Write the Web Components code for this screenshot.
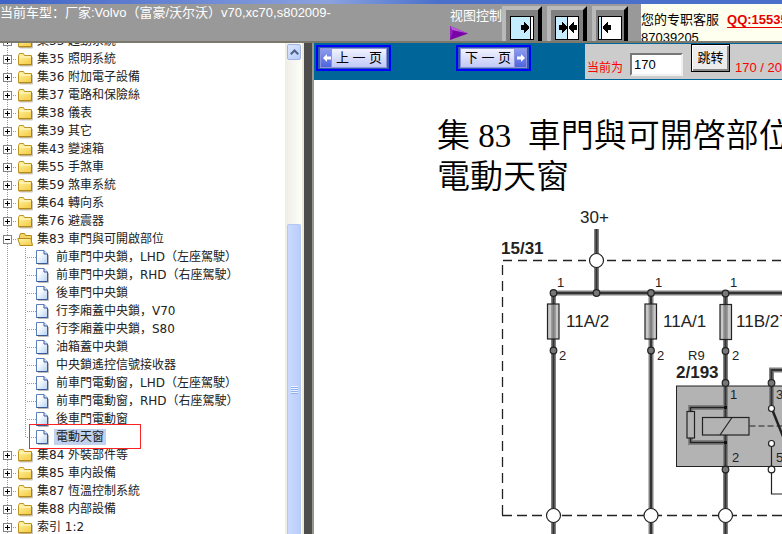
<!DOCTYPE html>
<html lang="zh">
<head>
<meta charset="utf-8">
<title>Volvo 电路图</title>
<style>
html, body { margin: 0; height: 100%; overflow: hidden; background: #fff; }
body { font: 13px/18px "Liberation Sans", "Noto Sans CJK SC", sans-serif; }
</style>
</head>
<body>
<wiring-app></wiring-app>
<script>
const define = (name, html, setup) => {
  const tpl = document.createElement('template');
  tpl.innerHTML = html;
  customElements.define(name, class extends HTMLElement {
    connectedCallback() {
      if (this.shadowRoot) return;
      const root = this.attachShadow({ mode: 'open' });
      root.append(tpl.content.cloneNode(true));
      if (setup) setup(this, root);
    }
  });
};

/* Bevelled button of the view switcher */
define('view-button', `
<style>
:host { display: block; flex: none; }
button { display: flex; align-items: center; justify-content: center; width: 40px; height: 35px; box-sizing: border-box;
  margin: 0; padding: 4px 0 0; background: #808080; border: 0 solid; border-width: 4px 4px 0 4px;
  border-color: #b9b9b9 #000 #000 #b9b9b9; }
:host([narrow]) button { width: 36px; }
svg { display: block; flex: none; }
</style>
<button type="button"><svg width="24" height="24" viewBox="0 0 24 24" shape-rendering="crispEdges"></svg></button>`,
(host, root) => {
  const right = x => `<path d="M${x} 9h3v-3h1v1h1v1h1v1h1v1h1v3h-1v1h-1v1h-1v1h-1v1h-1v-3h-3z"/>`;
  const left = x => `<path d="M${x} 9h-3v-3h-1v1h-1v1h-1v1h-1v1h-1v3h1v1h1v1h1v1h1v1h1v-3h3z"/>`;
  const frame = '<rect x=".5" y=".5" width="23" height="23" fill="#fff" stroke="#000"/>';
  const art = {
    left: frame + '<path fill="#c4edff" d="M1 1h19v22H1z"/><path d="M20 1h1v22h-1z"/>' + right(11),
    both: frame + '<path fill="#c4edff" d="M1 1h11v22H1z"/><path d="M12 1h1v22h-1z"/>' + right(4) + left(22),
    right: frame + '<path fill="#c4edff" d="M1 1h2v22H1z"/><path d="M3 1h1v22H3z"/>' + left(13)
  };
  root.querySelector('svg').innerHTML = art[host.getAttribute('kind')];
  root.querySelector('button').setAttribute('aria-label', host.getAttribute('label'));
});

define('app-header', `
<style>
:host { display: block; flex: none; border-bottom: 2px solid #7b796c; background: #999; color: #fff; }
.strip { height: 4px; background: linear-gradient(90deg, #3f63c6, #8ba2df 42%, #4a70cc 56%, #4a70cc); }
.row { display: flex; height: 37px; overflow: hidden; }
.car { flex: 1 1 0; min-width: 0; white-space: nowrap; overflow: hidden; }
.view { width: 52px; flex: none; padding-top: 3px; white-space: nowrap; }
.view svg { display: block; margin-top: 1px; }
.buttons { display: flex; flex: none; padding-top: 2px; gap: 5px; width: 139px; }
.service { flex: 0 0 141px; background: #fffff0; color: #000; padding-top: 7px; overflow: hidden; white-space: nowrap; }
.service div { height: 18px; }
a { color: #e60000; font-weight: bold; margin-left: 8px; text-underline-offset: 3px; }
</style>
<div class="strip"></div>
<div class="row">
  <div class="car">当前车型：厂家:Volvo（富豪/沃尔沃）v70,xc70,s802009-</div>
  <div class="view">视图控制
    <svg width="18" height="14" viewBox="0 0 18 14"><path d="M0 0L18 7.500L0 14z" fill="#7a00a8"/><path d="M0 0L18 7.500L2 4z" fill="#b65ad6"/><path d="M0 14V0l3 6z" fill="#9420be"/></svg>
  </div>
  <div class="buttons">
    <view-button kind="left" label="左"></view-button>
    <view-button kind="both" label="左右"></view-button>
    <view-button kind="right" label="右" narrow></view-button>
  </div>
  <div class="service"><div>您的专职客服<a href="#qq">QQ:15535</a></div><div>87039205</div></div>
</div>`);

/* Group row with expander and folder */
define('tree-folder', `
<style>
:host { display: block; }
.row { display: flex; align-items: center; height: 18px; padding-left: 3px;
  background: repeating-linear-gradient(180deg, #999 0 1px, #fff 1px 2px) 7px 0 / 1px 100% no-repeat; }
button { flex: none; width: 9px; height: 9px; padding: 0; margin: 0; border: 1px solid #848484; background: #fff; display: block; }
button svg, .icon { display: block; flex: none; }
.dash { flex: none; width: 5px; height: 1px; background: repeating-linear-gradient(90deg, #fff 0 1px, #999 1px 2px); }
a { margin-left: 3px; color: #222; text-decoration: none; white-space: nowrap; }
.kids { background: repeating-linear-gradient(180deg, #999 0 1px, #fff 1px 2px) 7px 0 / 1px 100% no-repeat,
  repeating-linear-gradient(180deg, #999 0 1px, #fff 1px 2px) 25px 0 / 1px calc(100% - 9px) no-repeat; }
</style>
<div class="row">
  <button type="button" aria-label="展开"><svg width="7" height="7" viewBox="0 0 7 7" shape-rendering="crispEdges"><path d="M1 3h5v1H1z"/><path class="v" d="M3 1h1v5H3z"/></svg></button>
  <span class="dash"></span>
  <svg class="icon" width="17" height="15" viewBox="0 0 17 15"></svg>
  <a href="#group"></a>
</div>
<div class="kids"><slot></slot></div>`,
(host, root) => {
  const open = host.hasAttribute('open');
  root.querySelector('a').textContent = host.getAttribute('label');
  if (open) root.querySelector('.v').remove();
  root.querySelector('.icon').innerHTML = `<defs><linearGradient id="g" x1="0" y1="0" x2="0.6" y2="1"><stop offset="0" stop-color="#fff7a8"/><stop offset="1" stop-color="#f6d050"/></linearGradient></defs>` + (open
    ? '<path d="M2.500 12V3.500l1-2h4l1 2h6V12z" fill="#f3d566" stroke="#b48a18"/><path d="M.8 6.500h13L15.500 13.500H3z" fill="url(#g)" stroke="#b48a18"/>'
    : '<path d="M15.500 5v9H3" fill="none" stroke="#c8c8c8"/><path d="M1.500 12.500V3.500l1-2h4l1 2h7v9z" fill="url(#g)" stroke="#c09424"/><path d="M2 5h12" stroke="#fffbd0"/><path d="M1.500 13h13V4" fill="none" stroke="#a8801c"/>');
});

/* Document row */
define('tree-page', `
<style>
:host { display: flex; align-items: center; height: 18px; padding-left: 26px; position: relative; }
.dash { flex: none; width: 10px; height: 1px; background: repeating-linear-gradient(90deg, #fff 0 1px, #999 1px 2px); }
svg { display: block; flex: none; }
a { margin-left: 5px; padding: 0 2px; line-height: 16px; color: #222; text-decoration: none; white-space: nowrap; }
:host([selected]) a { background: #c1d2ee; }
:host([selected])::after { content: ""; position: absolute; left: 29px; top: -4px; width: 110px; height: 23px; border: 1px solid #f22; }
</style>
<span class="dash"></span>
<svg width="13" height="15" viewBox="0 0 13 15"><defs><linearGradient id="p" x1="0" y1="0" x2="1" y2="1"><stop offset=".3" stop-color="#fff"/><stop offset="1" stop-color="#b4d0f4"/></linearGradient></defs><path d="M12.500 5v9.500H2" fill="none" stroke="#bbb"/><path d="M.5 .5h7.500l3.500 3.500v9.500H.5z" fill="url(#p)" stroke="#5b80bd"/><path d="M8 .5V4h3.500" fill="#dceafc" stroke="#39599c"/><path d="M11.500 4v9.500H.5" fill="none" stroke="#39599c"/></svg>
<a href="#page"><slot></slot></a>`);

define('tree-view', `
<style>
:host { display: block; flex: 1; min-width: 0; overflow: hidden; font: 12px/18px "DejaVu Sans", "Noto Sans CJK SC", sans-serif; }
nav { margin-top: -11px; }
</style>
<nav><slot></slot></nav>`);

define('pane-scrollbar', `
<style>
:host { display: flex; flex-direction: column; flex: none; width: 14px; padding: 1px 1px 0 2px; background: linear-gradient(90deg, #eeede5, #fefefb); }
button { flex: none; height: 16px; width: 14px; box-sizing: border-box; padding: 0; margin: 0; border: 1px solid #9fb5e6; border-radius: 2px;
  background: linear-gradient(135deg, #dbe6ff, #b7cbfa); display: grid; place-items: center; }
.track { flex: 34 1 0; }
.thumb { flex: 64 1 0; border: 1px solid #b4c8f6; border-bottom: 0; border-radius: 2px 2px 0 0; background: linear-gradient(90deg, #cbdafe, #b9cdfb);
  display: flex; justify-content: center; align-items: center; }
.grip { width: 7px; height: 8px; margin-top: 20px; background: repeating-linear-gradient(180deg, #eef4fe 0 1px, #8cb0f8 1px 2px); }
svg { display: block; }
</style>
<button type="button" aria-label="向上滚动"><svg width="9" height="6" viewBox="0 0 9 6"><path d="M.8 5.200L4.500 1.500l3.700 3.700" fill="none" stroke="#4d6185" stroke-width="2"/></svg></button>
<div class="track"></div>
<div class="thumb"><div class="grip"></div></div>`);

define('page-button', `
<style>
:host { display: block; flex: none; }
button { display: flex; width: 75px; height: 26px; box-sizing: border-box; padding: 2px 3px; margin: 0; border: 2px solid #00f; background: #2a5fa8; font: inherit; line-height: 18px; color: #000; }
:host([next]) button { flex-direction: row-reverse; }
.arrow { flex: none; width: 11px; height: 18px; background: linear-gradient(#8c9cf0, #5064dc); display: grid; place-items: center; box-shadow: 0 0 0 1px #8c92dc; }
.text { flex: 1; height: 18px; background: linear-gradient(#f2f3ff, #c0c8f6); text-align: center; white-space: nowrap; box-shadow: 0 0 0 1px #8c92dc; }
</style>
<button type="button"><span class="arrow"><svg width="8" height="8" viewBox="0 0 8 8"><path fill="#fff"/></svg></span><span class="text"><slot></slot></span></button>`,
(host, root) => root.querySelector('path').setAttribute('d',
  host.hasAttribute('next') ? 'M8 4L4 0v2.500H0v3h4V8z' : 'M0 4l4-4v2.500h4v3H4V8z'));

define('pager-bar', `
<style>
:host { display: flex; flex: none; height: 37px; background: #069; }
.nav { flex: none; display: flex; gap: 65px; width: 269px; padding: 2px 0 0 2px; }
form { flex: 1; min-width: 0; margin: 1px 0; background: #ccc; display: flex; align-items: flex-start; padding-left: 2px; overflow: hidden; color: #f00; white-space: nowrap; }
label { margin-top: 14px; width: 44px; line-height: 20px; font-size: 12px; }
input { flex: none; width: 53px; height: 23px; margin: 9px 8px 0 0; box-sizing: border-box; padding: 0 2px; font: inherit; background: #fff; border: 2px solid; border-color: #777 #f0f0f0 #f0f0f0 #777; border-radius: 0; }
button { flex: none; width: 39px; height: 28px; margin: 0 5px 0 0; padding: 0; font: inherit; color: #000; background: #ececec; border: 1px solid #000; box-shadow: inset 1px 1px #fff, inset -2px -2px #888; }
output { margin-top: 15px; }
</style>
<div class="nav"><page-button>上 一 页</page-button><page-button next>下 一 页</page-button></div>
<form onsubmit="return false"><label for="n">当前为</label><input id="n" type="text" value="170"><button type="submit">跳转</button><output>170 / 20</output></form>`);

define('wiring-sheet', `
<style>
:host { display: block; flex: 1; overflow: hidden; background: #fff; }
h1 { margin: 36px 0 0 123px; font: 350 33px/41px "Liberation Serif", "Noto Sans CJK TC", serif; color: #000; white-space: nowrap; }
svg { display: block; overflow: visible; font-family: "Liberation Sans", sans-serif; fill: #222; }
</style>
<h1>集 83&nbsp; 車門與可開啓部位<br>電動天窗</h1>
<svg width="468" height="334" viewBox="314 198 468 334" role="img" aria-label="電動天窗">
  <g fill="none" stroke="#222">
    <path d="M503 260.500H586M607 260.500H900" stroke-width="1.300" stroke-dasharray="9 6"/>
    <path d="M502.500 265V516" stroke-width="1.300" stroke-dasharray="10 6"/>
    <path d="M502 515.500H900" stroke-width="1.300" stroke-dasharray="10 5"/>
  </g>
  <rect x="676.500" y="386" width="200" height="80.500" fill="#b3b3b3" stroke="#222"/>
  <g fill="none">
    <g stroke="#808080" stroke-width="5">
      <path d="M596.500 229V293M553.500 293H900M553.500 293V550M651 293V550M725.500 293V550M771.500 406V370H900"/>
      <path d="M725.500 407.500H690.500V442.500H725.500"/>
    </g>
    <path d="M596.500 229V293M553.500 293H900M553.500 293V550M651 293V550M725.500 293V550M771.500 406V370H900" stroke="#333" stroke-width="2"/>
    <path d="M725.500 407.500H690.500V442.500H725.500" stroke="#222" stroke-width="1.500"/>
  </g>
  <g fill="#aaa" fill-opacity=".65" stroke="#222" stroke-width="1.200">
    <rect x="547.500" y="304" width="11.500" height="35"/><rect x="645" y="304" width="11.500" height="35"/><rect x="720" y="304.500" width="11.500" height="35"/>
  </g>
  <g fill="#b3b3b3" stroke="#222" stroke-width="1.200">
    <rect x="687" y="411.500" width="7.500" height="26.500"/><rect x="702.500" y="417.500" width="46.500" height="17.500"/>
    <path d="M720 435L732 417.500" fill="none"/>
    <path d="M749.500 426H784" fill="none" stroke-dasharray="6 3"/>
  </g>
  <path d="M724 406h3v3h-3zM724 441h3v3h-3z" fill="#111"/>
  <path d="M772 409L790 454" stroke="#222" stroke-width="2.500"/>
  <path d="M771.500 447V494H900" fill="none" stroke="#222" stroke-width="1.200"/>
  <g fill="#777" stroke="#222" stroke-width="1.200">
    <circle cx="553.500" cy="293" r="3.300"/><circle cx="596.500" cy="293" r="3.300"/><circle cx="651" cy="293" r="3.300"/><circle cx="725.500" cy="293.500" r="3.300"/>
    <circle cx="553.500" cy="350.500" r="3.300"/><circle cx="651" cy="350.500" r="3.300"/><circle cx="725.500" cy="351" r="3.300"/>
    <circle cx="725.500" cy="383" r="3.300"/><circle cx="771.500" cy="383" r="3.300"/><circle cx="725.500" cy="469.500" r="3.300"/>
  </g>
  <g fill="#fff" stroke="#222" stroke-width="1.200">
    <circle cx="596.500" cy="260.500" r="7"/><circle cx="553.500" cy="515.500" r="7"/><circle cx="651" cy="515.500" r="7"/><circle cx="725.500" cy="515.500" r="7"/>
    <circle cx="771.500" cy="408.500" r="3"/><circle cx="771.500" cy="443.500" r="3"/><circle cx="771.500" cy="469.500" r="3.300"/>
  </g>
  <g font-size="17">
    <text x="580" y="223">30+</text><text x="566" y="327">11A/2</text><text x="663" y="327">11A/1</text><text x="736" y="327">11B/27</text>
    <text x="501" y="254" font-weight="bold">15/31</text><text x="676" y="378" font-weight="bold">2/193</text>
  </g>
  <g font-size="13">
    <text x="557" y="287">1</text><text x="655" y="287">1</text><text x="730" y="287">1</text>
    <text x="559" y="360">2</text><text x="657" y="360">2</text><text x="732" y="360">2</text>
    <text x="688" y="360">R9</text><text x="730" y="399">1</text><text x="732" y="462">2</text><text x="776" y="399">3</text><text x="776" y="462">5</text>
  </g>
</svg>`);

define('wiring-app', `
<style>
:host { display: flex; flex-direction: column; height: 100vh; overflow: hidden; }
.body { flex: 1; min-height: 0; display: flex; }
aside { flex: none; width: 304px; box-sizing: border-box; display: flex; border-right: 2px solid #ece9d8; background: #fff; }
.split { flex: none; width: 8px; background: #4d4d4d; border-right: 2px solid #99978a; }
main { flex: 1; min-width: 0; display: flex; flex-direction: column; }
</style>
<app-header></app-header>
<div class="body">
  <aside>
    <tree-view>
      <tree-folder label="集33 起動系統"></tree-folder>
      <tree-folder label="集35 照明系統"></tree-folder>
      <tree-folder label="集36 附加電子設備"></tree-folder>
      <tree-folder label="集37 電路和保險絲"></tree-folder>
      <tree-folder label="集38 儀表"></tree-folder>
      <tree-folder label="集39 其它"></tree-folder>
      <tree-folder label="集43 變速箱"></tree-folder>
      <tree-folder label="集55 手煞車"></tree-folder>
      <tree-folder label="集59 煞車系統"></tree-folder>
      <tree-folder label="集64 轉向系"></tree-folder>
      <tree-folder label="集76 避震器"></tree-folder>
      <tree-folder label="集83 車門與可開啟部位" open>
        <tree-page>前車門中央鎖，LHD（左座駕駛）</tree-page>
        <tree-page>前車門中央鎖，RHD（右座駕駛）</tree-page>
        <tree-page>後車門中央鎖</tree-page>
        <tree-page>行李廂蓋中央鎖，V70</tree-page>
        <tree-page>行李廂蓋中央鎖，S80</tree-page>
        <tree-page>油箱蓋中央鎖</tree-page>
        <tree-page>中央鎖遙控信號接收器</tree-page>
        <tree-page>前車門電動窗，LHD（左座駕駛）</tree-page>
        <tree-page>前車門電動窗，RHD（右座駕駛）</tree-page>
        <tree-page>後車門電動窗</tree-page>
        <tree-page selected>電動天窗</tree-page>
      </tree-folder>
      <tree-folder label="集84 外裝部件等"></tree-folder>
      <tree-folder label="集85 車内設備"></tree-folder>
      <tree-folder label="集87 恆溫控制系統"></tree-folder>
      <tree-folder label="集88 内部設備"></tree-folder>
      <tree-folder label="索引 1:2"></tree-folder>
    </tree-view>
    <pane-scrollbar></pane-scrollbar>
  </aside>
  <div class="split"></div>
  <main>
    <pager-bar></pager-bar>
    <wiring-sheet></wiring-sheet>
  </main>
</div>`);
</script>
</body>
</html>
